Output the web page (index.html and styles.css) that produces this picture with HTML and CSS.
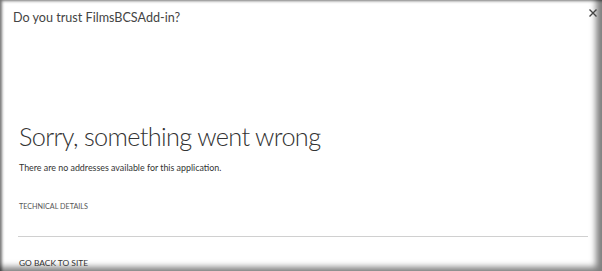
FILE: index.html
```html
<!DOCTYPE html>
<html>
<head>
<meta charset="utf-8">
<link rel="stylesheet" href="styles.css">
</head>
<body>
<div class="frame">
  <header class="title-bar">
    <h1 class="title">Do you trust FilmsBCSAdd-in?</h1>
    <button class="close" aria-label="Close">
      <svg width="8" height="8" viewBox="0 0 8 8"><path d="M0.5 0.5L7.5 7.5M7.5 0.5L0.5 7.5" stroke="#444" stroke-width="1.4"/></svg>
    </button>
  </header>
  <main class="content">
    <h2 class="error-title">Sorry, something went wrong</h2>
    <p class="error-msg">There are no addresses available for this application.</p>
    <p class="details">TECHNICAL DETAILS</p>
    <hr class="divider">
    <a class="back" href="#">GO BACK TO SITE</a>
  </main>
</div>
</body>
</html>
```
FILE: styles.css
```css
html, body {
  margin: 0;
  padding: 0;
  background: #fff;
}
.frame {
  width: 602px;
  height: 271px;
  box-sizing: border-box;
  overflow: hidden;
  font-family: "Lato", "Open Sans", "Liberation Sans", sans-serif;
  color: #333;
  box-shadow: inset 3px 2px 3px -1px rgba(0,0,0,0.55), inset -8px -6px 6px -2px rgba(0,0,0,0.5);
}
.title-bar {
  display: flex;
  justify-content: space-between;
  align-items: flex-start;
  padding: 9px 5px 0 13px;
}
.title {
  margin: 0;
  font-size: 12.6px;
  font-weight: 400;
  color: #444;
  line-height: 18px;
}
.close {
  border: 0;
  background: none;
  padding: 0;
  margin-top: 0;
  width: 8px;
  height: 8px;
  display: flex;
}
.content {
  padding: 91px 14px 0 19px;
}
.error-title {
  margin: 0;
  font-size: 25.3px;
  font-weight: 300;
  letter-spacing: -0.65px;
  color: #333;
  line-height: 36px;
}
.error-msg {
  margin: 7px 0 0;
  font-size: 8.9px;
  color: #333;
  line-height: 14px;
}
.details {
  margin: 26px 0 0;
  font-size: 7.2px;
  color: #555;
  line-height: 12px;
}
.divider {
  margin: 23px 0 0 -1px;
  border: 0;
  border-top: 1px solid #d0d0d0;
}
.back {
  display: block;
  margin-top: 19px;
  font-size: 8.4px;
  color: #333;
  text-decoration: none;
  line-height: 14px;
}
```
